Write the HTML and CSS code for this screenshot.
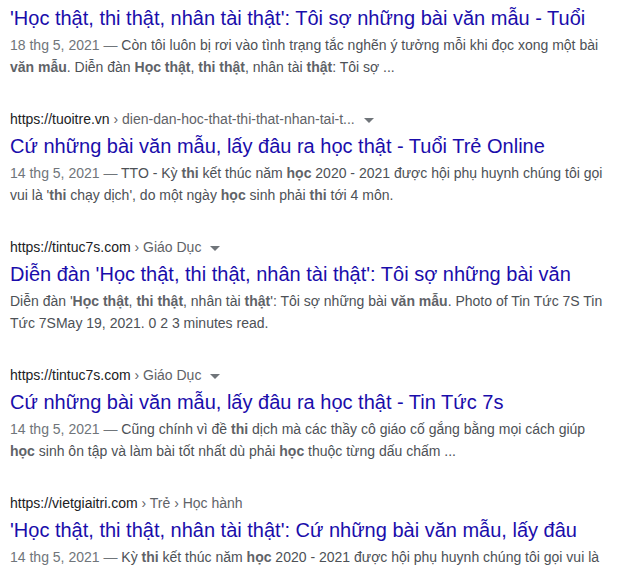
FILE: index.html
```html
<!DOCTYPE html>
<html lang="vi">
<head>
    <meta charset="UTF-8">
    <meta name="viewport" content="width=device-width, initial-scale=1.0">
    <title>Kết quả tìm kiếm</title>
    <link rel="stylesheet" href="styles.css">
</head>
<body>
    <div class="results">
        <!-- kết quả đầu tiên bị cắt phần URL phía trên -->
        <div class="result first">
            <h3 class="title"><a href="#">'Học thật, thi thật, nhân tài thật': Tôi sợ những bài văn mẫu - Tuổi</a></h3>
            <div class="snippet"><span class="date">18 thg 5, 2021 — </span>Còn tôi luôn bị rơi vào tình trạng tắc nghẽn ý tưởng mỗi khi đọc xong một bài <b>văn mẫu</b>. Diễn đàn <b>Học thật</b>, <b>thi thật</b>, nhân tài <b>thật</b>: Tôi sợ ...</div>
        </div>

        <div class="result">
            <div class="url">https://tuoitre.vn<span class="crumb"> › dien-dan-hoc-that-thi-that-nhan-tai-t...</span><span class="arrow"></span></div>
            <h3 class="title"><a href="#">Cứ những bài văn mẫu, lấy đâu ra học thật - Tuổi Trẻ Online</a></h3>
            <div class="snippet"><span class="date">14 thg 5, 2021 — </span>TTO - Kỳ <b>thi</b> kết thúc năm <b>học</b> 2020 - 2021 được hội phụ huynh chúng tôi gọi vui là '<b>thi</b> chạy dịch', do một ngày <b>học</b> sinh phải <b>thi</b> tới 4 môn.</div>
        </div>

        <div class="result">
            <div class="url">https://tintuc7s.com<span class="crumb"> › Giáo Dục</span><span class="arrow"></span></div>
            <h3 class="title"><a href="#">Diễn đàn 'Học thật, thi thật, nhân tài thật': Tôi sợ những bài văn</a></h3>
            <div class="snippet">Diễn đàn '<b>Học thật</b>, <b>thi thật</b>, nhân tài <b>thật</b>': Tôi sợ những bài <b>văn mẫu</b>. Photo of Tin Tức 7S Tin Tức 7SMay 19, 2021. 0 2 3 minutes read.</div>
        </div>

        <div class="result">
            <div class="url">https://tintuc7s.com<span class="crumb"> › Giáo Dục</span><span class="arrow"></span></div>
            <h3 class="title"><a href="#">Cứ những bài văn mẫu, lấy đâu ra học thật - Tin Tức 7s</a></h3>
            <div class="snippet"><span class="date">14 thg 5, 2021 — </span>Cũng chính vì đề <b>thi</b> dịch mà các thầy cô giáo cố gắng bằng mọi cách giúp <b>học</b> sinh ôn tập và làm bài tốt nhất dù phải <b>học</b> thuộc từng dấu chấm ...</div>
        </div>

        <div class="result">
            <div class="url">https://vietgiaitri.com<span class="crumb"> › Trẻ › Học hành</span></div>
            <h3 class="title"><a href="#">'Học thật, thi thật, nhân tài thật': Cứ những bài văn mẫu, lấy đâu</a></h3>
            <div class="snippet"><span class="date">14 thg 5, 2021 — </span>Kỳ <b>thi</b> kết thúc năm <b>học</b> 2020 - 2021 được hội phụ huynh chúng tôi gọi vui là '<b>thi</b> chạy dịch', do một ngày <b>học</b> sinh phải <b>thi</b> tới 4 môn.</div>
        </div>
    </div>
</body>
</html>
```

FILE: styles.css
```css
body {
    font-family: Arial, 'Liberation Sans', sans-serif;
    background-color: #fff;
    margin: 0;
    padding: 0;
    overflow: hidden;
}

.results {
    width: 600px;
    padding: 0 10px;
}

.result {
    margin-bottom: 32px;
}

.url {
    font-size: 14px;
    line-height: 18px;
    color: #202124;
    white-space: nowrap;
}

.crumb {
    color: #5f6368;
}

.arrow {
    display: inline-block;
    margin-left: 9px;
    vertical-align: middle;
    border-left: 5px solid transparent;
    border-right: 5px solid transparent;
    border-top: 5px solid #70757a;
}

.title {
    margin: 0 0 3px;
    padding-top: 5px;
    font-size: 20px;
    font-weight: normal;
    line-height: 26px;
    white-space: nowrap;
}

.title a {
    color: #1a0dab;
    text-decoration: none;
}

.snippet {
    font-size: 14px;
    line-height: 22px;
    color: #4d5156;
}

.snippet b {
    color: #5f6368;
}

.date {
    color: #70757a;
}
```
